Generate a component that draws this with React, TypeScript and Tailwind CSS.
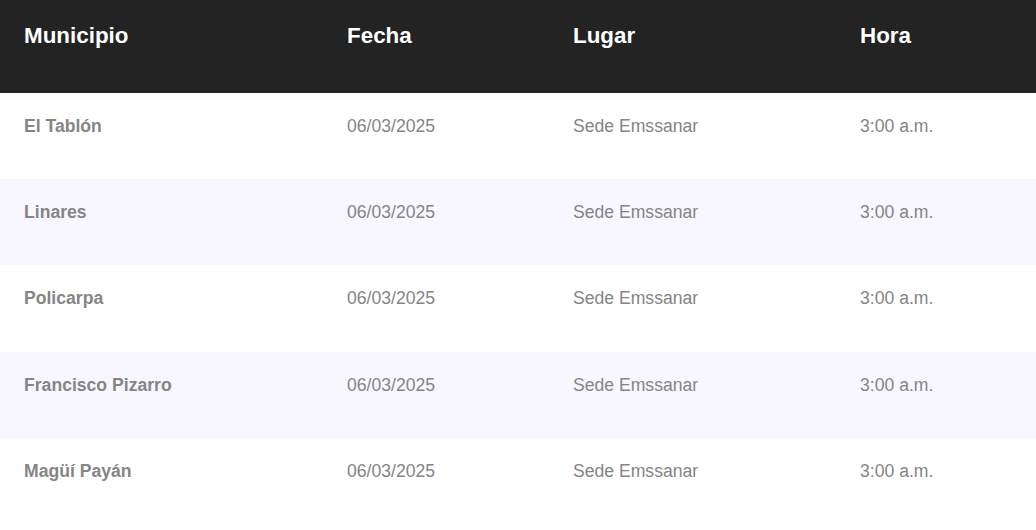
const rows = [
  { municipio: 'El Tablón', fecha: '06/03/2025', lugar: 'Sede Emssanar', hora: '3:00 a.m.' },
  { municipio: 'Linares', fecha: '06/03/2025', lugar: 'Sede Emssanar', hora: '3:00 a.m.' },
  { municipio: 'Policarpa', fecha: '06/03/2025', lugar: 'Sede Emssanar', hora: '3:00 a.m.' },
  { municipio: 'Francisco Pizarro', fecha: '06/03/2025', lugar: 'Sede Emssanar', hora: '3:00 a.m.' },
  { municipio: 'Magüí Payán', fecha: '06/03/2025', lugar: 'Sede Emssanar', hora: '3:00 a.m.' },
];

const App = () => {
  return (
    <div className="w-[1036px] min-h-[530px] bg-white font-['Liberation_Sans',Arial,sans-serif]">
      <div className="grid grid-cols-[323px_226px_287px_1fr] h-[93px] bg-[#232323] text-white text-[22.4px] font-bold leading-[26px]">
        <div className="px-6 pt-[23px]">Municipio</div>
        <div className="px-6 pt-[23px]">Fecha</div>
        <div className="px-6 pt-[23px]">Lugar</div>
        <div className="px-6 pt-[23px]">Hora</div>
      </div>
      {rows.map((row, i) => (
        <div
          key={row.municipio}
          className={`grid grid-cols-[323px_226px_287px_1fr] h-[86.2px] text-[17.6px] leading-[26px] text-[#858585] ${
            i % 2 === 1 ? 'bg-[#f8f7ff]' : 'bg-white'
          }`}
        >
          <div className="px-6 pt-5 font-bold">{row.municipio}</div>
          <div className="px-6 pt-5">{row.fecha}</div>
          <div className="px-6 pt-5">{row.lugar}</div>
          <div className="px-6 pt-5">{row.hora}</div>
        </div>
      ))}
    </div>
  );
};

export default App;
